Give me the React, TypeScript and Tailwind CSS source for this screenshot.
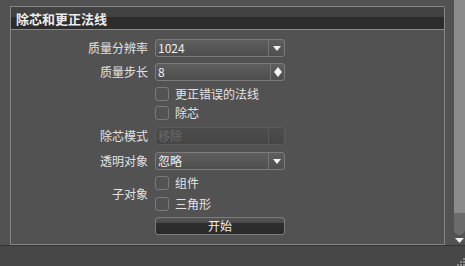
import { ReactNode } from "react"

const font = { fontFamily: '"Noto Sans CJK SC", "Liberation Sans", sans-serif' }

function Label({ children }: { children: ReactNode }) {
  return <div className="text-right text-[12px] leading-none text-[#e2e2e2]">{children}</div>
}

function Dropdown({ value, disabled = false }: { value: string; disabled?: boolean }) {
  return (
    <div
      className={`flex h-[18px] w-[130px] items-stretch rounded-[3px] border ${
        disabled
          ? "border-[#5c5c5c] bg-gradient-to-b from-[#4c4c4c] to-[#464646]"
          : "border-[#7c7c7c] bg-gradient-to-b from-[#5e5e5e] to-[#4e4e4e]"
      }`}
    >
      <div
        className={`flex flex-1 items-center pl-[2px] text-[12px] leading-none ${
          disabled ? "text-[#6a6a6a]" : "text-[#f0f0f0]"
        }`}
      >
        {value}
      </div>
      <div
        className={`flex w-[16px] items-center justify-center border-l ${
          disabled ? "border-[#5a5a5a]" : "border-[#747474]"
        }`}
      >
        {!disabled && (
          <svg width="8" height="5" viewBox="0 0 8 5">
            <path d="M0 0 H8 L4 5 Z" fill="#f2f2f2" />
          </svg>
        )}
      </div>
    </div>
  )
}

function Spinner({ value }: { value: string }) {
  return (
    <div className="flex h-[18px] w-[130px] items-stretch rounded-[3px] border border-[#7c7c7c] bg-gradient-to-b from-[#5e5e5e] to-[#4e4e4e]">
      <div className="flex flex-1 items-center pl-[2px] text-[12px] leading-none text-[#f0f0f0]">{value}</div>
      <div className="flex w-[14px] items-center justify-center border-l border-[#747474]">
        <svg width="8" height="10" viewBox="0 0 8 10">
          <path d="M4 0 L8 5 L4 10 L0 5 Z" fill="#f2f2f2" />
        </svg>
      </div>
    </div>
  )
}

function Check({ label }: { label: string }) {
  return (
    <div className="flex h-[14px] items-center gap-[6px]">
      <div className="h-[14px] w-[14px] rounded-[3px] border border-[#7a7a7a]" />
      <span className="text-[12px] leading-none text-[#e2e2e2]">{label}</span>
    </div>
  )
}

export default function App() {
  return (
    <div className="flex h-[266px] w-[465px] flex-col overflow-hidden bg-[#525252]" style={font}>
      <div className="flex h-[245px]">
        {/* Panel */}
        <div className="pl-[10px] pt-[6px]">
          <div className="flex h-[239px] w-[435px] flex-col rounded-tr-[2px] border border-[#868686]">
            <div className="flex h-[23px] flex-col border-b border-[#8a8a8a]">
              <div className="h-[10px] bg-[#424242]" />
              <div className="flex-1 bg-[#2c2c2c]" />
            </div>
            <div className="-mt-[23px] flex h-[23px] items-center pl-[5px] text-[13px] font-bold leading-none text-[#ececec]">
              除芯和更正法线
            </div>

            <div className="grid grid-cols-[137px_130px] gap-x-[7px] pt-[9px]">
              <div className="flex h-[18px] items-center justify-end">
                <Label>质量分辨率</Label>
              </div>
              <Dropdown value="1024" />

              <div className="mt-[6px] flex h-[18px] items-center justify-end">
                <Label>质量步长</Label>
              </div>
              <div className="mt-[6px]">
                <Spinner value="8" />
              </div>

              <div />
              <div className="mt-[6px]">
                <Check label="更正错误的法线" />
              </div>

              <div />
              <div className="mt-[5px]">
                <Check label="除芯" />
              </div>

              <div className="mt-[7px] flex h-[18px] items-center justify-end">
                <Label>除芯模式</Label>
              </div>
              <div className="mt-[7px]">
                <Dropdown value="移除" disabled />
              </div>

              <div className="mt-[7px] flex h-[18px] items-center justify-end">
                <Label>透明对象</Label>
              </div>
              <div className="mt-[7px]">
                <Dropdown value="忽略" />
              </div>

              <div className="mt-[6px] flex items-center justify-end">
                <Label>子对象</Label>
              </div>
              <div className="mt-[6px] flex flex-col gap-[7px]">
                <Check label="组件" />
                <Check label="三角形" />
              </div>

              <div />
              <div className="mt-[6px] flex h-[18px] items-center justify-center rounded-[3px] border border-[#7c7c7c] bg-[linear-gradient(to_bottom,#555555_0%,#4a4a4a_30%,#2e2e2e_31%,#2a2a2a_100%)] text-[12px] leading-none text-[#f0f0f0]">
                开始
              </div>
            </div>
          </div>
        </div>

        <div className="flex-1" />

        {/* Scrollbar */}
        <div className="flex w-[11px] flex-col items-center">
          <div className="h-[213px] w-full bg-[#8b8b8b]" />
          <div className="h-[22px] w-full rounded-b-[6px] bg-[#6b6b6b]" />
          <svg width="9" height="5" viewBox="0 0 9 5" className="mt-[3px]">
            <path d="M0 0 H9 L4.5 5 Z" fill="#f0f0f0" />
          </svg>
        </div>
      </div>

      {/* Bottom strip */}
      <div className="relative flex-1 border-t border-[#333333] bg-[#474747]">
        <svg width="8" height="8" viewBox="0 0 8 8" className="absolute bottom-0 right-0">
          <rect x="6" y="0" width="2" height="2" fill="#8a8a8a" />
          <rect x="3" y="3" width="2" height="2" fill="#8a8a8a" />
          <rect x="6" y="3" width="2" height="2" fill="#8a8a8a" />
          <rect x="0" y="6" width="2" height="2" fill="#8a8a8a" />
          <rect x="3" y="6" width="2" height="2" fill="#8a8a8a" />
          <rect x="6" y="6" width="2" height="2" fill="#8a8a8a" />
        </svg>
      </div>
    </div>
  )
}
